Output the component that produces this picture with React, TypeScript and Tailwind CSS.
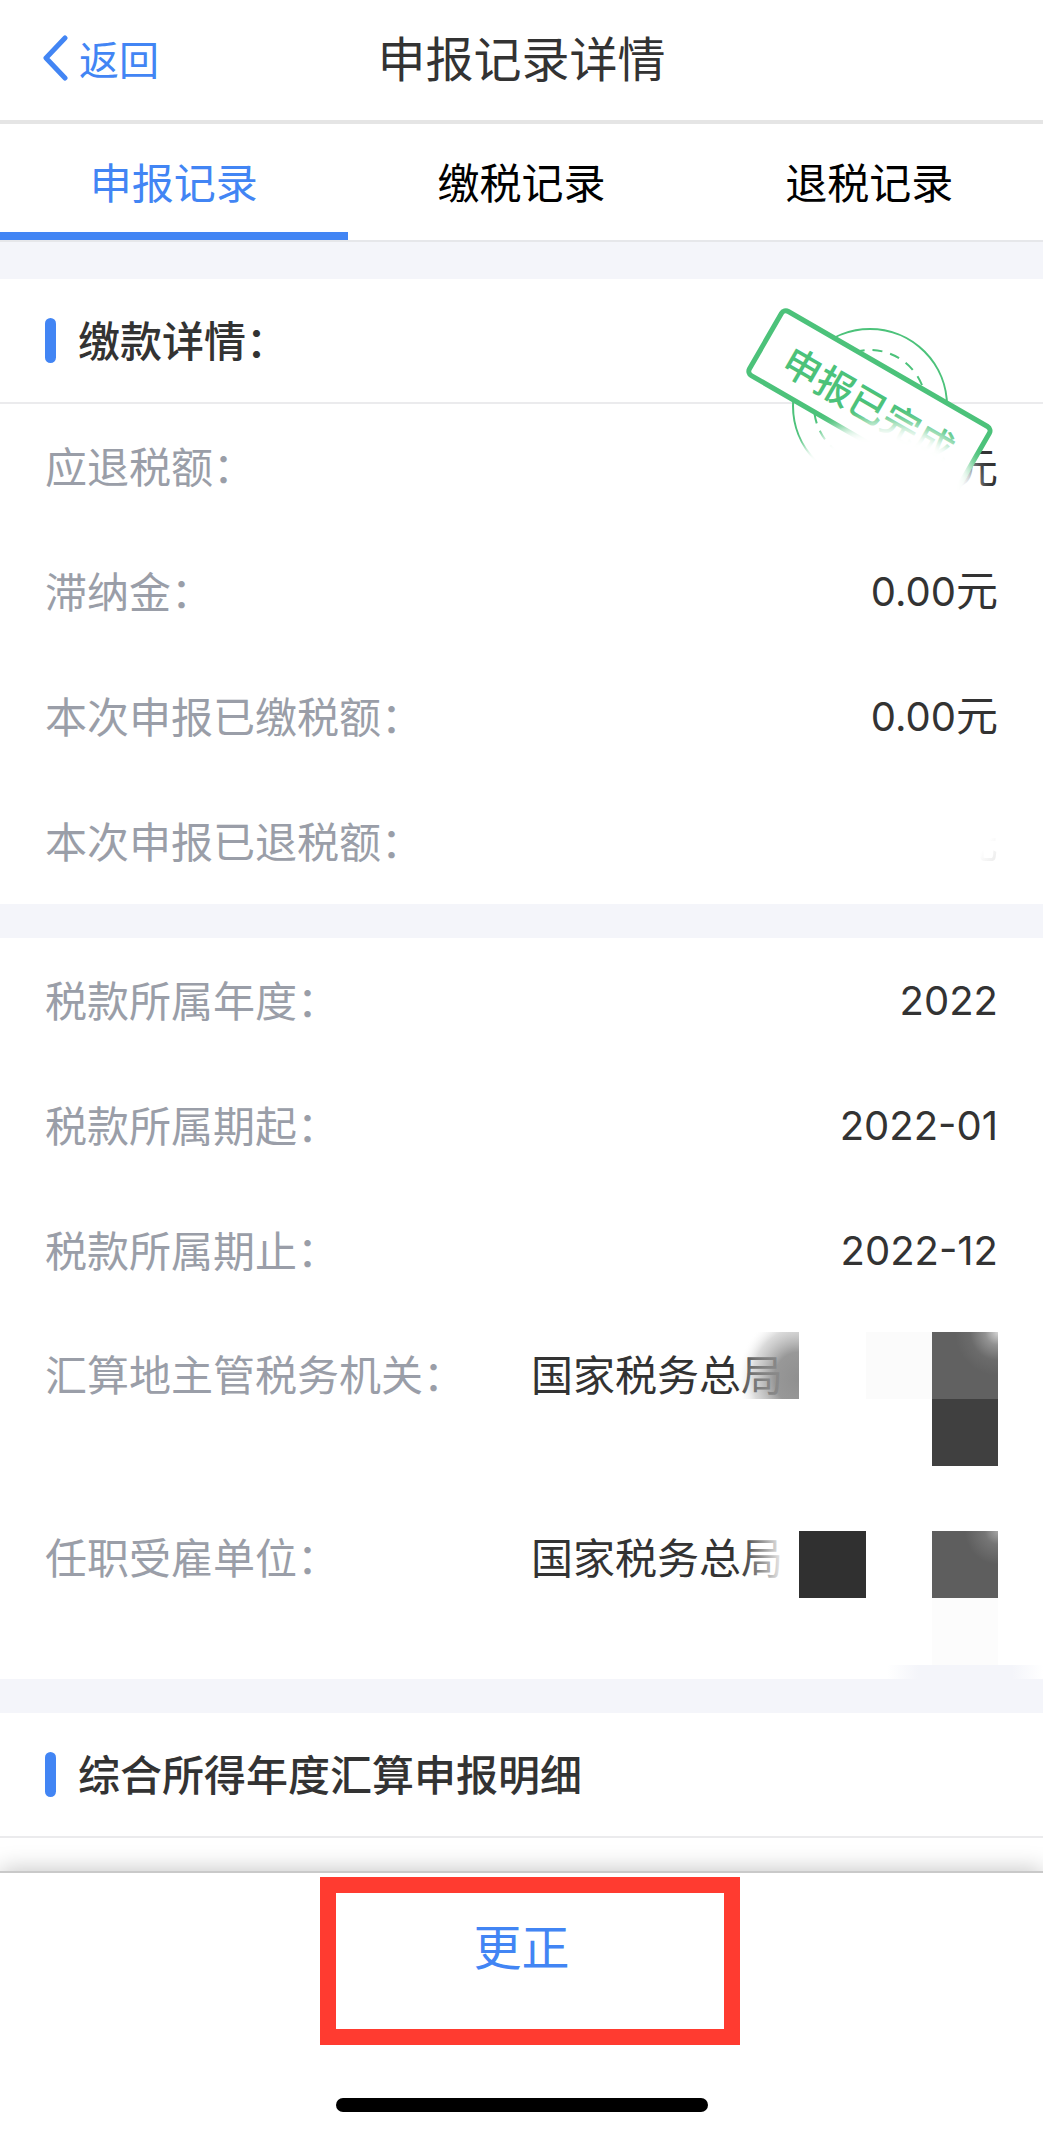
import { useState } from "react"
import { clsx } from "clsx"

const TABS = ["申报记录", "缴税记录", "退税记录"]

interface RowProps {
    label: string
    children?: React.ReactNode
}

function Row({ label, children }: RowProps) {
    return (
        <div className="flex h-[125px] items-center justify-between px-[45px] pb-1">
            <dt className="text-[#9a9ea8]">{label}</dt>
            <dd>{children}</dd>
        </div>
    )
}

// Two-line value, used for long organisation names
function TallRow({ label, children }: RowProps) {
    return (
        <div className="relative flex h-[183px] items-start justify-between px-[45px] pt-[30px]">
            <dt className="text-[#9a9ea8]">{label}</dt>
            <dd className="w-[49%]">{children}</dd>
        </div>
    )
}

function Num({ children }: { children: React.ReactNode }) {
    return <span className="font-['Inter',sans-serif] text-[40px]">{children}</span>
}

function SectionTitle({ children }: { children: React.ReactNode }) {
    return (
        <div className="flex h-[125px] items-center gap-[22px] border-b-2 border-[#ebebed] pl-[45px]">
            <span className="h-[45px] w-[11px] rounded-full bg-[#4285f4]" />
            <h2 className="pb-1 font-medium">{children}</h2>
        </div>
    )
}

function Stamp() {
    return (
        <svg className="pointer-events-none absolute right-0 top-0" width="343" height="281" viewBox="0 9 343 281" fill="none" aria-hidden="true">
            <defs>
                <filter id="haze" x="-30%" y="-40%" width="160%" height="180%">
                    <feGaussianBlur stdDeviation="8" />
                </filter>
            </defs>
            <g stroke="#4cc27a">
                <circle cx="170" cy="136" r="77" strokeWidth="2" />
                <circle cx="170" cy="136" r="56" strokeWidth="2" strokeDasharray="10 8" strokeDashoffset="4" />
                <rect x="84" y="39" width="240" height="74" rx="5" strokeWidth="5" fill="#fff" transform="rotate(30 84 39)" />
            </g>
            <text x="79" y="100" fontSize="38" fontWeight="500" fill="#4cc27a" transform="rotate(30 79 100)">申报已完成</text>
            <ellipse cx="180" cy="217" rx="97" ry="65" fill="#fff" filter="url(#haze)" />
        </svg>
    )
}

function OfficeMask() {
    return (
        <svg className="pointer-events-none absolute right-[45px] top-[19px]" width="266" height="134" viewBox="0 0 266 134" aria-hidden="true">
            <defs>
                <radialGradient id="officeFade" cx="1" cy="0.7" r="1">
                    <stop offset="0" stopColor="#8f8f8f" />
                    <stop offset="0.4" stopColor="#8f8f8f" stopOpacity="0.92" />
                    <stop offset="0.75" stopColor="#b5b5b5" stopOpacity="0.5" />
                    <stop offset="1" stopColor="#fff" stopOpacity="0" />
                </radialGradient>
                <radialGradient id="officeCorner" cx="1" cy="0" r="0.65">
                    <stop offset="0" stopColor="#d5d5d5" />
                    <stop offset="0.3" stopColor="#929292" />
                    <stop offset="0.65" stopColor="#6b6b6b" />
                    <stop offset="1" stopColor="#616161" />
                </radialGradient>
            </defs>
            <rect x="5" width="62" height="67" fill="url(#officeFade)" />
            <rect x="134" width="66" height="67" fill="#fbfbfb" />
            <rect x="200" width="66" height="67" fill="url(#officeCorner)" />
            <rect x="200" y="67" width="66" height="67" fill="#404040" />
        </svg>
    )
}

function EmployerMask() {
    return (
        <svg className="pointer-events-none absolute right-0 top-[35px]" width="311" height="149" viewBox="0 0 311 149" aria-hidden="true">
            <defs>
                <linearGradient id="employerFade">
                    <stop offset="0" stopColor="#fff" stopOpacity="0" />
                    <stop offset="0.7" stopColor="#fff" stopOpacity="0.9" />
                    <stop offset="1" stopColor="#fff" />
                </linearGradient>
                <radialGradient id="employerCorner" cx="1" cy="0" r="0.5">
                    <stop offset="0" stopColor="#a5a5a5" />
                    <stop offset="0.4" stopColor="#757575" />
                    <stop offset="1" stopColor="#5e5e5e" />
                </radialGradient>
                <linearGradient id="smear">
                    <stop offset="0" stopColor="#f4f5fa" stopOpacity="0" />
                    <stop offset="0.2" stopColor="#f4f5fa" />
                    <stop offset="0.8" stopColor="#f4f5fa" />
                    <stop offset="1" stopColor="#f4f5fa" stopOpacity="0" />
                </linearGradient>
            </defs>
            <rect x="8" width="59" height="67" fill="url(#employerFade)" />
            <rect x="67" width="67" height="67" fill="#303030" />
            <rect x="200" width="66" height="67" fill="url(#employerCorner)" />
            <rect x="200" y="67" width="66" height="67" fill="#fcfcfc" />
            <rect x="155" y="134" width="156" height="15" fill="url(#smear)" />
        </svg>
    )
}

export default function App() {
    const [active, setActive] = useState(0)

    return (
        <div className="flex min-h-screen flex-col bg-[#f4f5fa] font-['Noto_Sans_CJK_SC',sans-serif] text-[42px] leading-[60px] text-[#333]">
            <header className="grid h-[124px] grid-cols-[1fr_auto_1fr] items-center border-b-4 border-[#e5e5e5] bg-white px-[42px] pb-2">
                <button type="button" className="flex items-center gap-[9px] pt-1 text-[40px] text-[#4285f4]">
                    <svg width="28" height="46" viewBox="0 0 28 46" fill="none" stroke="currentColor" strokeWidth="5" strokeLinecap="round" strokeLinejoin="round" aria-hidden="true">
                        <path d="M23 3 4 23l19 20" />
                    </svg>
                    返回
                </button>
                <h1 className="text-5xl">申报记录详情</h1>
            </header>

            <div role="tablist" className="grid h-[118px] grid-cols-3 border-b-2 border-[#e6e7ea] bg-white">
                {TABS.map((tab, i) => (
                    <button
                        key={tab}
                        type="button"
                        role="tab"
                        aria-selected={active === i}
                        onClick={() => setActive(i)}
                        className={clsx(
                            "border-b-8 pt-1.5",
                            active === i ? "border-[#4285f4] text-[#4285f4]" : "border-transparent text-black"
                        )}
                    >
                        {tab}
                    </button>
                ))}
            </div>

            <main className="flex flex-col gap-[34px] pt-[37px]">
                <section className="relative bg-white">
                    <SectionTitle>缴款详情：</SectionTitle>
                    <dl>
                        <Row label="应退税额：">元</Row>
                        <Row label="滞纳金："><Num>0.00</Num>元</Row>
                        <Row label="本次申报已缴税额："><Num>0.00</Num>元</Row>
                        <Row label="本次申报已退税额：">
                            <span className="bg-linear-to-br from-white from-65% to-[#e4e4e4] bg-clip-text text-transparent">元</span>
                        </Row>
                    </dl>
                    <Stamp />
                </section>

                <section className="bg-white">
                    <dl>
                        <Row label="税款所属年度："><Num>2022</Num></Row>
                        <Row label="税款所属期起："><Num>2022-01</Num></Row>
                        <Row label="税款所属期止："><Num>2022-12</Num></Row>
                        <TallRow label="汇算地主管税务机关：">
                            国家税务总局
                            <OfficeMask />
                        </TallRow>
                        <TallRow label="任职受雇单位：">
                            国家税务总局
                            <EmployerMask />
                        </TallRow>
                    </dl>
                </section>

                <section className="bg-white pb-[33px]">
                    <SectionTitle>综合所得年度汇算申报明细</SectionTitle>
                </section>
            </main>

            <footer className="sticky bottom-0 flex grow flex-col border-t-2 border-[#c9c9c9] bg-white shadow-[0_-2px_22px_rgba(0,0,0,0.22)]">
                <button type="button" className="h-[142px] w-full text-5xl text-[#4285f4]">更正</button>
                <div className="pointer-events-none absolute left-[320px] top-1 h-[168px] w-[420px] border-16 border-[#ff3b30]" />
                <div className="mx-auto mb-5 mt-auto h-[14px] w-[372px] rounded-full bg-black" />
            </footer>
        </div>
    )
}
